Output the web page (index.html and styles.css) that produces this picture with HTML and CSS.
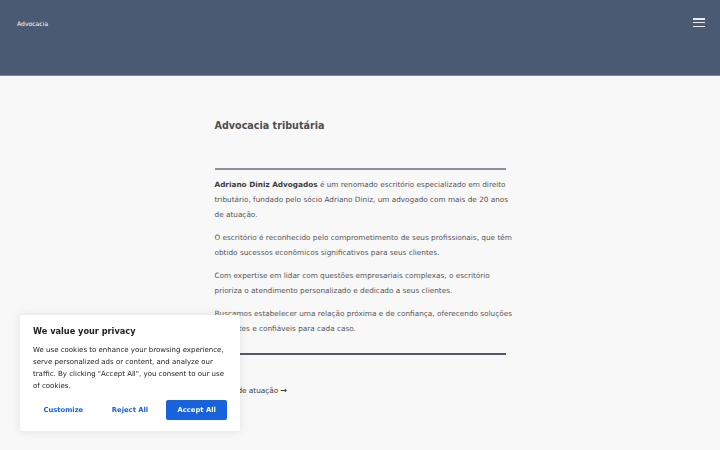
FILE: index.html
```html
<!DOCTYPE html>
<html lang="pt-BR">
<head>
  <meta charset="UTF-8" />
  <title>Advocacia tributária</title>
  <link rel="stylesheet" href="styles.css">
</head>
<body>
  <header class="site-header">
    <a class="brand" href="#">Advocacia</a>
    <button class="menu-btn" aria-label="Menu">
      <span></span><span></span><span></span>
    </button>
  </header>

  <main class="page">
    <article class="content">
      <h1>Advocacia tributária</h1>
      <hr class="rule rule-top" />
      <p><strong>Adriano Diniz Advogados</strong> é um renomado escritório especializado em direito tributário, fundado pelo sócio Adriano Diniz, um advogado com mais de 20 anos de atuação.</p>
      <p>O escritório é reconhecido pelo comprometimento de seus profissionais, que têm obtido sucessos econômicos significativos para seus clientes.</p>
      <p>Com expertise em lidar com questões empresariais complexas, o escritório prioriza o atendimento personalizado e dedicado a seus clientes.</p>
      <p>Buscamos estabelecer uma relação próxima e de confiança, oferecendo soluções eficientes e confiáveis para cada caso.</p>
      <hr class="rule rule-bottom" />
      <a class="more-link" href="#">Áreas de atuação <span class="arrow">&rarr;</span></a>
    </article>
  </main>

  <div class="cookie-box">
    <h2>We value your privacy</h2>
    <p>We use cookies to enhance your browsing experience, serve personalized ads or content, and analyze our traffic. By clicking "Accept All", you consent to our use of cookies.</p>
    <div class="cookie-actions">
      <button class="cookie-btn ghost">Customize</button>
      <button class="cookie-btn ghost">Reject All</button>
      <button class="cookie-btn solid">Accept All</button>
    </div>
  </div>
</body>
</html>
```

FILE: styles.css
```css
body {
  font-family: 'DejaVu Sans', sans-serif;
  background-color: #f8f8f8;
  color: #555555;
  margin: 0;
}
.site-header {
  height: 75px;
  background-color: #4a5a73;
  border-bottom: 1px solid #7d8aa0;
  display: flex;
  justify-content: space-between;
  align-items: flex-start;
  padding: 0 15px 0 17px;
}
.brand {
  margin-top: 20px;
  color: #ffffff;
  font-size: 6.1px;
  text-decoration: none;
}
.menu-btn {
  margin-top: 18px;
  width: 12px;
  height: 9px;
  padding: 0;
  border: none;
  background: none;
  display: flex;
  flex-direction: column;
  justify-content: space-between;
}
.menu-btn span {
  display: block;
  width: 12px;
  height: 1.5px;
  background-color: #e8ecf2;
}
.page {
  display: flex;
  justify-content: center;
  padding: 43px 0 30px;
}
.content {
  width: 291px;
}
.content h1 {
  margin: 0 0 35px;
  font-size: 9.6px;
  font-weight: bold;
  color: #4d4d4d;
  line-height: 14px;
}
.rule {
  border: none;
  margin: 0;
  height: 2px;
}
.rule-top {
  background-color: #8f909c;
  margin-bottom: 7px;
}
.rule-bottom {
  background-color: #4d5a70;
  margin-top: 17px;
}
.content p {
  margin: 0 -14px 8px 0;
  font-size: 7.3px;
  line-height: 15px;
  color: #555555;
}
.content p strong {
  color: #3d3d3d;
}
.more-link {
  display: inline-block;
  margin-top: 28px;
  font-size: 7.3px;
  line-height: 15px;
  color: #3d3d3d;
  text-decoration: none;
}
.arrow {
  font-size: 8px;
  font-weight: bold;
}
.cookie-box {
  position: fixed;
  left: 20px;
  top: 315px;
  width: 220px;
  box-sizing: border-box;
  padding: 10px 13px 11px;
  background-color: #ffffff;
  border-radius: 3px;
  box-shadow: 0 0 10px rgba(0, 0, 0, 0.1);
  color: #212121;
}
.cookie-box h2 {
  margin: 0 0 7px;
  font-size: 8.2px;
  line-height: 12px;
  color: #212121;
}
.cookie-box p {
  margin: 0 0 8px;
  font-size: 7px;
  line-height: 12px;
  color: #212121;
}
.cookie-actions {
  display: flex;
  gap: 6px;
}
.cookie-btn {
  flex: 1;
  height: 20px;
  padding: 0;
  font-family: inherit;
  font-size: 6.8px;
  font-weight: bold;
  border: 1px solid transparent;
  border-radius: 2px;
  cursor: pointer;
}
.cookie-btn.ghost {
  background: none;
  color: #1863dc;
}
.cookie-btn.solid {
  background-color: #1863dc;
  color: #ffffff;
}
```
